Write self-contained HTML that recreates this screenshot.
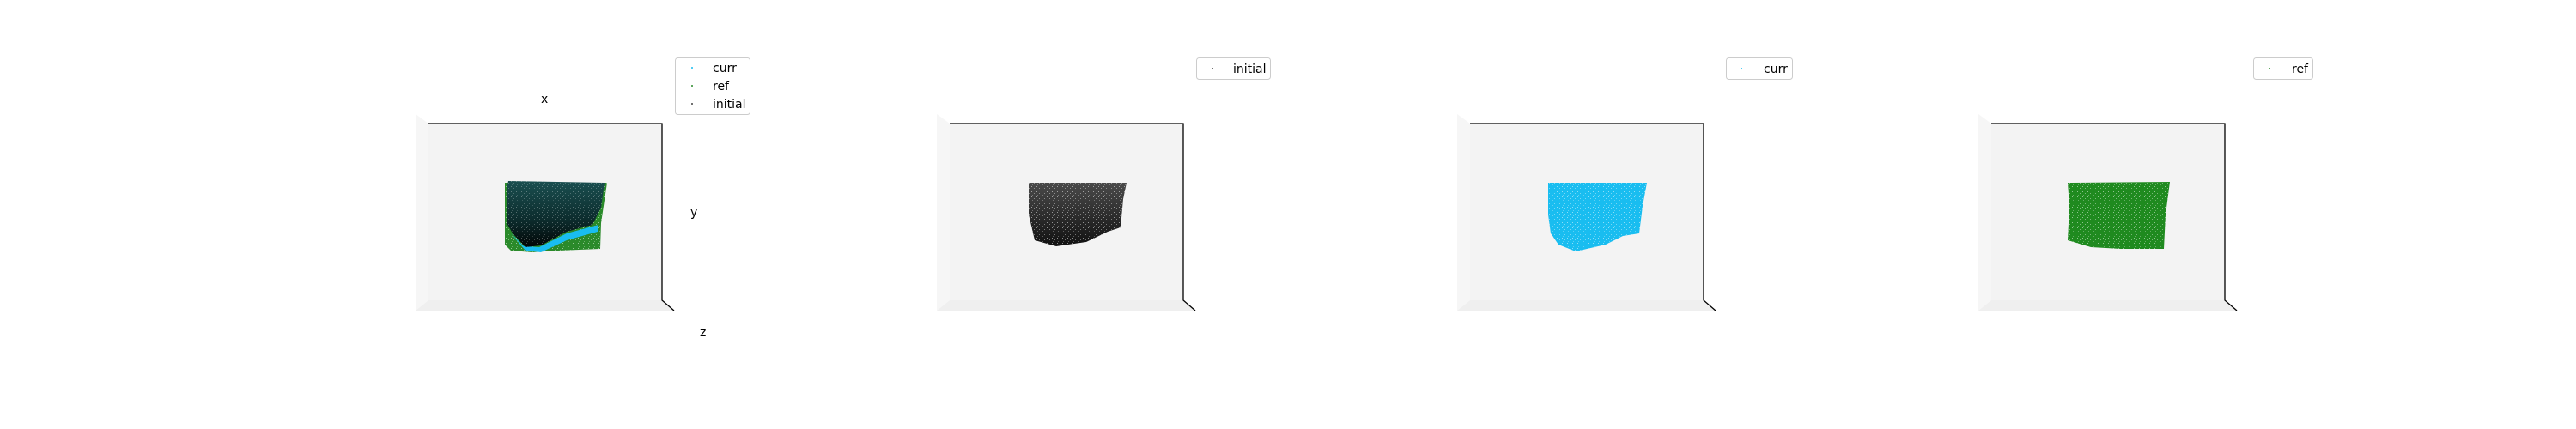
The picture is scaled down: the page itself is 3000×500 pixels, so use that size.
<!DOCTYPE html>
<html><head><meta charset="utf-8"><style>
html,body{margin:0;padding:0;background:#fff;width:3000px;height:500px;overflow:hidden}
svg{display:block}
text{font-family:"DejaVu Sans","Liberation Sans",sans-serif;font-size:14px;fill:#000}
</style></head><body>
<svg width="3000" height="500" viewBox="0 0 3000 500" xmlns="http://www.w3.org/2000/svg">
<defs>
<pattern id="spk" width="6" height="6" patternUnits="userSpaceOnUse">
<rect x="1" y="1" width="1" height="1" fill="#fff" opacity="0.5"/><rect x="4" y="3" width="1" height="1" fill="#fff" opacity="0.4"/><rect x="2" y="5" width="1" height="1" fill="#fff" opacity="0.3"/>
</pattern>
<linearGradient id="teal" x1="0" y1="0" x2="0" y2="1"><stop offset="0" stop-color="#1a4f50"/><stop offset="0.6" stop-color="#0c2b2c"/><stop offset="1" stop-color="#020606"/></linearGradient>
<linearGradient id="blk" x1="0" y1="0" x2="0" y2="1"><stop offset="0" stop-color="#4a4a4a"/><stop offset="1" stop-color="#111"/></linearGradient>
<g id="axes">
<polygon points="484,133 499,144 499,350 484,362" fill="#f6f6f6"/>
<polygon points="484,362 499,350 771,350 785,362" fill="#efefef"/>
<rect x="499" y="144" width="272" height="206" fill="#f3f3f3"/>
<polyline points="499,144 771,144 771,350 785,362" fill="none" stroke="#000" stroke-width="1.3"/>
</g>
</defs>
<!-- panel 1 -->
<use href="#axes"/>
<polygon points="588,213 707,213 700,260 699,290 650,292 620,294 595,292 588,285" fill="#2a8a2a"/>
<polygon points="588,213 707,213 700,260 699,290 650,292 620,294 595,292 588,285" fill="url(#spk)"/>
<polygon points="595,272 612,292 630,294 660,280 696,270 697,262 660,272 628,288 610,287 598,275" fill="#19bdf0"/>
<polygon points="592,211 704,213 700,242 690,262 660,270 630,286 612,288 597,272 590,260 590,220" fill="url(#teal)"/>
<polygon points="592,211 704,213 700,242 690,262 660,270 630,286 612,288 597,272 590,260 590,220" fill="url(#spk)" opacity="0.6"/>
<text x="630" y="120">x</text>
<text x="804" y="252">y</text>
<text x="815" y="392">z</text>
<rect x="786.5" y="67.5" width="87" height="66" rx="3" fill="#fff" stroke="#ccc"/>
<circle cx="806" cy="79" r="1" fill="#19bdf0"/><text x="830" y="84">curr</text>
<circle cx="806" cy="100" r="1" fill="#2a8a2a"/><text x="830" y="105">ref</text>
<circle cx="806" cy="121" r="1" fill="#444"/><text x="830" y="126">initial</text>
<!-- panel 2 -->
<use href="#axes" x="607"/>
<polygon points="1198,213 1312,213 1308,232 1305,265 1290,270 1265,282 1230,287 1205,280 1198,250" fill="url(#blk)"/>
<polygon points="1198,213 1312,213 1308,232 1305,265 1290,270 1265,282 1230,287 1205,280 1198,250" fill="url(#spk)"/>
<rect x="1393.5" y="67.5" width="86" height="25" rx="3" fill="#fff" stroke="#ccc"/>
<circle cx="1412" cy="80" r="1" fill="#444"/><text x="1436" y="85">initial</text>
<!-- panel 3 -->
<use href="#axes" x="1213"/>
<polygon points="1803,213 1918,213 1913,240 1909,272 1890,275 1870,285 1835,293 1815,285 1806,272 1803,250" fill="#19bdf0"/>
<polygon points="1803,213 1918,213 1913,240 1909,272 1890,275 1870,285 1835,293 1815,285 1806,272 1803,250" fill="url(#spk)"/>
<rect x="2010.5" y="67.5" width="77" height="25" rx="3" fill="#fff" stroke="#ccc"/>
<circle cx="2028" cy="80" r="1" fill="#19bdf0"/><text x="2054" y="85">curr</text>
<!-- panel 4 -->
<use href="#axes" x="1820"/>
<polygon points="2408,213 2527,212 2522,250 2520,290 2470,290 2435,288 2408,280 2410,240" fill="#1f8a1f"/>
<polygon points="2408,213 2527,212 2522,250 2520,290 2470,290 2435,288 2408,280 2410,240" fill="url(#spk)"/>
<rect x="2624.5" y="67.5" width="69" height="25" rx="3" fill="#fff" stroke="#ccc"/>
<circle cx="2643" cy="80" r="1" fill="#2a8a2a"/><text x="2669" y="85">ref</text>
</svg>
</body></html>
